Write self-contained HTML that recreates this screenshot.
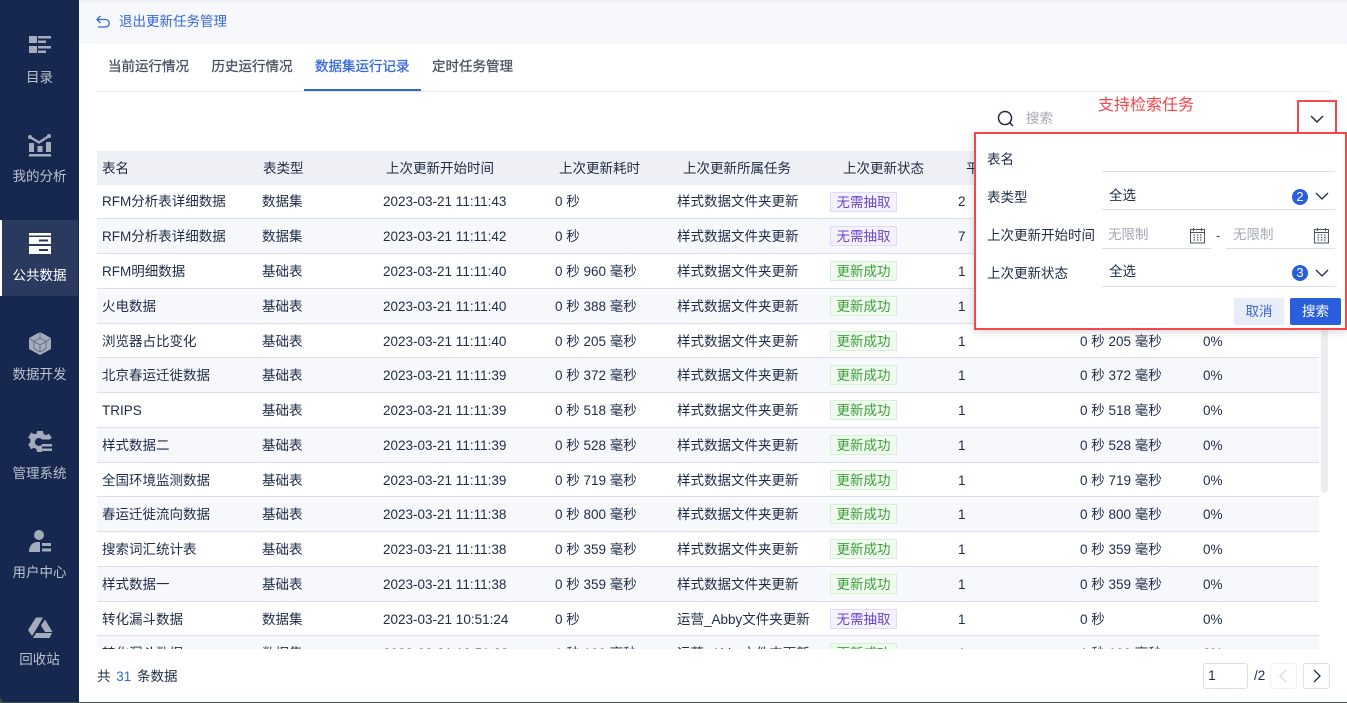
<!DOCTYPE html>
<html lang="zh"><head><meta charset="utf-8"><title>数据集运行记录</title>
<style>
*{box-sizing:border-box}
html,body{margin:0;padding:0;width:1347px;height:703px;overflow:hidden;background:#fff}
body{position:relative;font-family:"Liberation Sans","Noto Sans CJK SC",sans-serif;font-size:13.5px;color:#1e2b47}
.abs{position:absolute;white-space:nowrap}
#side{position:absolute;left:0;top:0;width:79px;height:703px;background:#16284f;border-bottom-left-radius:6px}
#act{position:absolute;left:0;top:220px;width:78px;height:76px;background:#2a3a5f;border-left:2px solid #fff}
.lab{position:absolute;left:0;width:79px;text-align:center;color:#bcc2cf;line-height:18px;font-size:13.5px}
.ic{position:absolute;left:27px;width:26px;height:26px}
#top{position:absolute;left:79px;top:0;width:1268px;height:44px;background:#f7f8fc;box-shadow:inset 0 3px 3px -2px #e6e7ea}
.tab{position:absolute;top:58px;line-height:18px;color:#4a5160;-webkit-text-stroke:.3px currentColor}
#hd{position:absolute;left:97px;top:151px;width:1222px;height:34px;background:#eef0f5;overflow:hidden}
#hd span{position:absolute;top:0;line-height:35px;white-space:nowrap}
#tb{position:absolute;left:97px;top:185px;width:1222px;height:464px;overflow:hidden}
.r{position:absolute;left:0;width:1222px;border-bottom:1px solid #dcdfe8}
.r.s{background:#f7f8fc}
.r span{position:absolute;white-space:nowrap;top:1px;line-height:34.5px}
.r.f span:not(.t){top:0}
.c1{left:5px}.c2{left:165px}.c3{left:286px}.c4{left:458px}.c5{left:580px}.c7{left:861px}.c8{left:983px}.c9{left:1106px}
.r .t{left:733px;top:7px;width:67px;height:20px;line-height:19px;text-align:center;border:1px solid;font-size:13.5px}
.r .n{color:#6b46c8;background:#f5f2ff;border-color:#e2dafc}
.r .y{color:#3f9e3a;background:#f0fbf0;border-color:#d5f0d5}
#sb{position:absolute;left:1321px;top:185px;width:7px;height:308px;background:#ecedf1;border-radius:4px}
#pn{position:absolute;left:974px;top:132px;width:373px;height:198px;background:#fff;border:2px solid #f9444a;box-shadow:0 2px 8px rgba(0,0,0,.15)}
#cb{position:absolute;left:1297px;top:100px;width:40px;height:34px;border:2px solid #f9444a;border-bottom:none;background:#fff}
.ln{position:absolute;height:1px;background:#dcdfe8}
.fl{position:absolute;line-height:18px;white-space:nowrap;color:#1e2b47}
.bd{position:absolute;width:16px;height:16px;border-radius:50%;background:#2a5fdc;color:#fff;text-align:center;line-height:16px;font-size:13px}
.btn{position:absolute;top:298px;height:27px;line-height:28px;text-align:center;border-radius:2px}
.pg{position:absolute;top:663px;height:26px;border:1px solid #dcdfe8;border-radius:3px;background:#fff}
</style></head><body>

<div id="side"></div>
<div id="act"></div>
<svg class="ic" style="top:32px" viewBox="0 0 26 26" fill="#a4abbb"><rect x="2" y="4" width="8" height="7"/><rect x="11" y="4" width="13" height="2.5"/><rect x="11" y="8.500" width="8" height="2.5"/><rect x="2" y="14" width="8" height="7"/><rect x="11" y="14" width="13" height="2.5"/><rect x="11" y="18.500" width="8" height="2.5"/></svg>
<div class="lab" style="top:69px">目录</div>
<svg class="ic" style="top:131px" viewBox="0 0 26 26" fill="#a4abbb"><rect x="2" y="23" width="22" height="2.5"/><rect x="2" y="12" width="5" height="9"/><rect x="10.500" y="15" width="5" height="6"/><rect x="19" y="11" width="5" height="10"/><path d="M3 6l9 5.500L22 5" fill="none" stroke="#a4abbb" stroke-width="2.400"/><circle cx="3" cy="6" r="2"/><circle cx="22" cy="5" r="2"/></svg>
<div class="lab" style="top:168px">我的分析</div>
<svg class="ic" style="top:231px" viewBox="0 0 26 26" fill="#fff"><rect x="2" y="2" width="22" height="2.5"/><path fill-rule="evenodd" d="M2 6h22v7H2zM12 8.500v2h9v-2z"/><path fill-rule="evenodd" d="M2 15h22v8H2zM12 18v2h9v-2z"/></svg>
<div class="lab" style="top:267px;color:#fff">公共数据</div>
<svg class="ic" style="top:330px" viewBox="0 0 26 26"><path d="M13 2l11 6v11l-11 6-11-6V8z" fill="#a4abbb"/><path d="M13 8l6 3.500v7L13 22l-6-3.500v-7zM13 8V2M7 11.500L2 8M19 11.500L24 8M13 15v7M7 11.500l6 3.500 6-3.500" fill="none" stroke="#16284f" stroke-width=".7" opacity=".6"/></svg>
<div class="lab" style="top:366px">数据开发</div>
<svg class="ic" style="top:429px" viewBox="0 0 26 26" fill="#a4abbb"><path fill-rule="evenodd" d="M10 2h6l.6 3 2.600 1.200 2.600-1.500 3 3.800-2 2H15a4 4 0 1 0 0 5v7.500h-5l-.6-3-2.600-1.200-2.600 1.500-3-5 2.200-2v-3L1.200 8.500l3-5 2.600 1.500L9.400 5z"/><rect x="15" y="15" width="10" height="2.500"/><rect x="15" y="19.500" width="10" height="2.500"/></svg>
<div class="lab" style="top:465px">管理系统</div>
<svg class="ic" style="top:528px" viewBox="0 0 26 26" fill="#a4abbb"><circle cx="12" cy="7" r="5"/><path d="M2 24c0-6 3-10 9-10h2v10z"/><rect x="15" y="15" width="9" height="3"/><rect x="15" y="20.500" width="9" height="3"/></svg>
<div class="lab" style="top:564px">用户中心</div>
<svg class="ic" style="top:615px" viewBox="0 0 26 26" fill="#a4abbb"><path d="M9 2.500h7l-7.500 13-3.500 5.500-4-6z"/><path d="M18 4.500l7.500 12.500h-7.500l-4-6.500z"/><path d="M9 18h16l-2.500 5H6z"/></svg>
<div class="lab" style="top:651px">回收站</div>

<div id="top"></div>
<svg class="abs" style="left:95px;top:14px" width="16" height="16" viewBox="0 0 16 16" fill="none" stroke="#3566e0" stroke-width="1.300"><path d="M5.500 2L2 5.500 5.500 9"/><path d="M2 5.500h8.500a3.500 3.500 0 0 1 0 7.500H3"/></svg>
<div class="abs" style="left:119px;top:13px;line-height:18px;color:#3566e0">退出更新任务管理</div>

<div class="tab" style="left:108px">当前运行情况</div>
<div class="tab" style="left:211.500px">历史运行情况</div>
<div class="tab" style="left:315px;color:#3566e0">数据集运行记录</div>
<div class="tab" style="left:432px">定时任务管理</div>
<div class="abs" style="left:97px;top:91px;width:1233px;height:1px;background:#e6e8ee"></div>
<div class="abs" style="left:304px;top:89px;width:117px;height:2px;background:#2f62e0"></div>

<svg class="abs" style="left:996px;top:109px" width="20" height="20" viewBox="0 0 20 20" fill="none" stroke="#1e2b47" stroke-width="1.500"><circle cx="9" cy="9" r="6.500"/><path d="M13.800 13.800L17 17"/></svg>
<div class="abs" style="left:1026px;top:110px;line-height:18px;color:#a3a8b3">搜索</div>
<div class="abs" style="left:1098px;top:96px;line-height:20px;font-size:16px;color:#f9444a">支持检索任务</div>

<div id="hd">
<span style="left:5px">表名</span><span style="left:166px">表类型</span><span style="left:289px">上次更新开始时间</span><span style="left:462px">上次更新耗时</span><span style="left:586px">上次更新所属任务</span><span style="left:746px">上次更新状态</span><span style="left:869px">平均更新耗时</span>
</div>

<div id="tb">
<div class="r f" style="top:0;height:34px"><span class="c1">RFM分析表详细数据</span><span class="c2">数据集</span><span class="c3">2023-03-21 11:11:43</span><span class="c4">0 秒</span><span class="c5">样式数据文件夹更新</span><span class="t n">无需抽取</span><span class="c7">2</span></div>
<div class="r s" style="top:34px;height:35px"><span class="c1">RFM分析表详细数据</span><span class="c2">数据集</span><span class="c3">2023-03-21 11:11:42</span><span class="c4">0 秒</span><span class="c5">样式数据文件夹更新</span><span class="t n">无需抽取</span><span class="c7">7</span></div>
<div class="r" style="top:69px;height:35px"><span class="c1">RFM明细数据</span><span class="c2">基础表</span><span class="c3">2023-03-21 11:11:40</span><span class="c4">0 秒 960 毫秒</span><span class="c5">样式数据文件夹更新</span><span class="t y">更新成功</span><span class="c7">1</span></div>
<div class="r s" style="top:104px;height:35px"><span class="c1">火电数据</span><span class="c2">基础表</span><span class="c3">2023-03-21 11:11:40</span><span class="c4">0 秒 388 毫秒</span><span class="c5">样式数据文件夹更新</span><span class="t y">更新成功</span><span class="c7">1</span></div>
<div class="r" style="top:139px;height:34px"><span class="c1">浏览器占比变化</span><span class="c2">基础表</span><span class="c3">2023-03-21 11:11:40</span><span class="c4">0 秒 205 毫秒</span><span class="c5">样式数据文件夹更新</span><span class="t y">更新成功</span><span class="c7">1</span><span class="c8">0 秒 205 毫秒</span><span class="c9">0%</span></div>
<div class="r s" style="top:173px;height:35px"><span class="c1">北京春运迁徙数据</span><span class="c2">基础表</span><span class="c3">2023-03-21 11:11:39</span><span class="c4">0 秒 372 毫秒</span><span class="c5">样式数据文件夹更新</span><span class="t y">更新成功</span><span class="c7">1</span><span class="c8">0 秒 372 毫秒</span><span class="c9">0%</span></div>
<div class="r" style="top:208px;height:35px"><span class="c1">TRIPS</span><span class="c2">基础表</span><span class="c3">2023-03-21 11:11:39</span><span class="c4">0 秒 518 毫秒</span><span class="c5">样式数据文件夹更新</span><span class="t y">更新成功</span><span class="c7">1</span><span class="c8">0 秒 518 毫秒</span><span class="c9">0%</span></div>
<div class="r s" style="top:243px;height:35px"><span class="c1">样式数据二</span><span class="c2">基础表</span><span class="c3">2023-03-21 11:11:39</span><span class="c4">0 秒 528 毫秒</span><span class="c5">样式数据文件夹更新</span><span class="t y">更新成功</span><span class="c7">1</span><span class="c8">0 秒 528 毫秒</span><span class="c9">0%</span></div>
<div class="r" style="top:278px;height:34px"><span class="c1">全国环境监测数据</span><span class="c2">基础表</span><span class="c3">2023-03-21 11:11:39</span><span class="c4">0 秒 719 毫秒</span><span class="c5">样式数据文件夹更新</span><span class="t y">更新成功</span><span class="c7">1</span><span class="c8">0 秒 719 毫秒</span><span class="c9">0%</span></div>
<div class="r s" style="top:312px;height:35px"><span class="c1">春运迁徙流向数据</span><span class="c2">基础表</span><span class="c3">2023-03-21 11:11:38</span><span class="c4">0 秒 800 毫秒</span><span class="c5">样式数据文件夹更新</span><span class="t y">更新成功</span><span class="c7">1</span><span class="c8">0 秒 800 毫秒</span><span class="c9">0%</span></div>
<div class="r" style="top:347px;height:35px"><span class="c1">搜索词汇统计表</span><span class="c2">基础表</span><span class="c3">2023-03-21 11:11:38</span><span class="c4">0 秒 359 毫秒</span><span class="c5">样式数据文件夹更新</span><span class="t y">更新成功</span><span class="c7">1</span><span class="c8">0 秒 359 毫秒</span><span class="c9">0%</span></div>
<div class="r s" style="top:382px;height:35px"><span class="c1">样式数据一</span><span class="c2">基础表</span><span class="c3">2023-03-21 11:11:38</span><span class="c4">0 秒 359 毫秒</span><span class="c5">样式数据文件夹更新</span><span class="t y">更新成功</span><span class="c7">1</span><span class="c8">0 秒 359 毫秒</span><span class="c9">0%</span></div>
<div class="r" style="top:417px;height:34px"><span class="c1">转化漏斗数据</span><span class="c2">数据集</span><span class="c3">2023-03-21 10:51:24</span><span class="c4">0 秒</span><span class="c5">运营_Abby文件夹更新</span><span class="t n">无需抽取</span><span class="c7">1</span><span class="c8">0 秒</span><span class="c9">0%</span></div>
<div class="r s" style="top:451px;height:35px"><span class="c1">转化漏斗数据</span><span class="c2">数据集</span><span class="c3">2023-03-21 10:51:23</span><span class="c4">1 秒 100 毫秒</span><span class="c5">运营_Abby文件夹更新</span><span class="t y">更新成功</span><span class="c7">1</span><span class="c8">1 秒 100 毫秒</span><span class="c9">0%</span></div>
</div>
<div id="sb"></div>

<div id="cb"></div>
<svg class="abs" style="left:1309px;top:113px" width="16" height="12" viewBox="0 0 16 12" fill="none" stroke="#1e2b47" stroke-width="1.400"><path d="M2 3l6 6 6-6"/></svg>
<div id="pn"></div>
<div class="fl" style="left:987px;top:151px">表名</div>
<div class="ln" style="left:1102px;top:171px;width:233px"></div>
<div class="fl" style="left:987px;top:189px">表类型</div>
<div class="fl" style="left:1109px;top:187px">全选</div>
<div class="bd" style="left:1292px;top:189px">2</div>
<svg class="abs" style="left:1314px;top:190px" width="16" height="12" viewBox="0 0 16 12" fill="none" stroke="#1e2b47" stroke-width="1.300"><path d="M2 3l6 6 6-6"/></svg>
<div class="ln" style="left:1102px;top:209px;width:233px"></div>
<div class="fl" style="left:987px;top:227px">上次更新开始时间</div>
<div class="fl" style="left:1108px;top:226px;color:#a3a8b3">无限制</div>
<svg class="abs" style="left:1189px;top:227px" width="17" height="17" viewBox="0 0 17 17" fill="none" stroke="#4a5568"><rect x="1.500" y="2.500" width="14" height="13.500"/><path d="M1.500 5.500h14M4.500 1v3M12.500 1v3"/><path d="M4.500 8h1.500M7.800 8h1.500M11 8h1.500M4.500 10.500h1.500M7.800 10.500h1.500M11 10.500h1.500M4.500 13h1.500M7.800 13h1.500M11 13h1.500" stroke-width="1.200"/></svg>
<div class="ln" style="left:1102px;top:248px;width:109px"></div>
<div class="fl" style="left:1216px;top:227px;color:#4a5568">-</div>
<div class="fl" style="left:1233px;top:226px;color:#a3a8b3">无限制</div>
<svg class="abs" style="left:1313px;top:227px" width="17" height="17" viewBox="0 0 17 17" fill="none" stroke="#4a5568"><rect x="1.500" y="2.500" width="14" height="13.500"/><path d="M1.500 5.500h14M4.500 1v3M12.500 1v3"/><path d="M4.500 8h1.500M7.800 8h1.500M11 8h1.500M4.500 10.500h1.500M7.800 10.500h1.500M11 10.500h1.500M4.500 13h1.500M7.800 13h1.500M11 13h1.500" stroke-width="1.200"/></svg>
<div class="ln" style="left:1226px;top:248px;width:109px"></div>
<div class="fl" style="left:987px;top:265px">上次更新状态</div>
<div class="fl" style="left:1109px;top:263px">全选</div>
<div class="bd" style="left:1292px;top:265px">3</div>
<svg class="abs" style="left:1314px;top:267px" width="16" height="12" viewBox="0 0 16 12" fill="none" stroke="#1e2b47" stroke-width="1.300"><path d="M2 3l6 6 6-6"/></svg>
<div class="ln" style="left:1102px;top:286px;width:233px"></div>
<div class="btn" style="left:1234px;width:50px;background:#e8eef9;color:#3b66d0">取消</div>
<div class="btn" style="left:1290px;width:51px;background:#2a5fdc;color:#fff">搜索</div>

<div class="abs" style="left:97px;top:668px;line-height:18px">共 <span style="color:#3566e0;margin:0 2px">31</span> 条数据</div>
<div class="pg" style="left:1203px;width:45px;line-height:22px;padding-left:4px;font-size:14px">1</div>
<div class="abs" style="left:1254px;top:667px;line-height:18px">/2</div>
<div class="pg" style="left:1270px;width:27px;border-color:#eef0f4"><svg width="25" height="24" viewBox="0 0 25 24" fill="none" stroke="#d5d8e0" stroke-width="1.300"><path d="M15 6l-6 6 6 6"/></svg></div>
<div class="pg" style="left:1303px;width:27px"><svg width="25" height="24" viewBox="0 0 25 24" fill="none" stroke="#1e2b47" stroke-width="1.300"><path d="M10 6l6 6-6 6"/></svg></div>
<div class="abs" style="left:0;top:702px;width:1347px;height:1px;background:#41504c"></div>
<div class="abs" style="left:0;top:697px;width:6px;height:6px;background:radial-gradient(circle at 100% 0,transparent 5.500px,#41504c 6px)"></div>
</body></html>
